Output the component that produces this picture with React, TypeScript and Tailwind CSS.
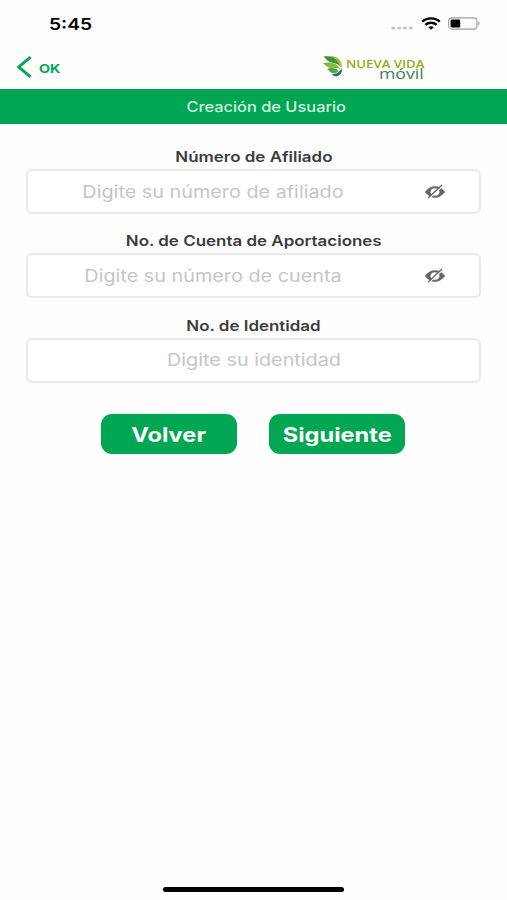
import type { ReactNode } from "react";

const fields = [
  {
    id: "afiliado",
    label: "Número de Afiliado",
    placeholder: "Digite su número de afiliado",
    hidden: true,
  },
  {
    id: "cuenta",
    label: "No. de Cuenta de Aportaciones",
    placeholder: "Digite su número de cuenta",
    hidden: true,
  },
  {
    id: "identidad",
    label: "No. de Identidad",
    placeholder: "Digite su identidad",
    hidden: false,
  },
] as const;

function StatusBar() {
  return (
    <div className="flex h-[47px] items-center justify-between pl-[49px] pr-[26px] text-black">
      <span className="inline-block origin-left scale-x-[1.2] text-[16px] font-semibold leading-none">5:45</span>
      <div className="flex items-center">
        <svg viewBox="0 0 24 6" aria-hidden="true" className="mt-[9px] h-[6px] w-[24px]" fill="#c4c4c4">
          <ellipse cx="3.4" cy="3" rx="2.1" ry="1.6" />
          <ellipse cx="9.2" cy="3" rx="2.1" ry="1.6" />
          <ellipse cx="15" cy="3" rx="2.1" ry="1.6" />
          <ellipse cx="20.8" cy="3" rx="2.1" ry="1.6" />
        </svg>
        <svg viewBox="0 0 20 13" aria-hidden="true" className="ml-[7px] h-[13px] w-[20px]">
          <g fill="none" stroke="#000" strokeWidth="2.4">
            <path d="M1.2 4.7C6 .2 14 .2 18.8 4.7" />
            <path d="M4.3 7.9c3.2-2.9 8.2-2.9 11.4 0" />
          </g>
          <path d="M7.2 10.2c1.6-1.3 4-1.3 5.6 0L10 12.7Z" fill="#000" />
        </svg>
        <svg viewBox="0 0 34 13" aria-hidden="true" className="ml-[6px] h-[13px] w-[34px]">
          <rect x="1.6" y=".9" width="28.4" height="11.2" rx="3.4" fill="none" stroke="#9b9b9b" strokeWidth="1.1" />
          <rect x="3.6" y="2.5" width="9.6" height="8" rx="1.2" fill="#000" />
          <path d="M31.4 4.7c1.4.5 1.4 3.1 0 3.6Z" fill="#777" />
        </svg>
      </div>
    </div>
  );
}

function Logo() {
  return (
    <div className="flex h-[30px] w-[104px] items-start">
      <svg viewBox="0 0 22 21" aria-hidden="true" className="mt-px h-[21px] w-[22px] shrink-0">
        <path d="M1.5.5C11-.8 18 1.5 19.5 11 15.5 7 9 7 6 5 4 3.8 3.5 2 1.5.5Z" fill="#3f9142" />
        <path d="M9 .2C15.5 0 20.3 4.5 20 11.5L17.5 9.5C16.5 5 13 2.5 9 .2Z" fill="#a3c42f" />
        <path d="M.8 7.2C6.5 5.8 15 6.2 18.3 13 14 11 10.5 13 6.5 11.4 4 10.4 3.3 8.4.8 7.2Z" fill="#86b93c" />
        <path d="M5 12.7C9.5 11.5 14.5 11.5 16.6 15.2 14.3 17 12 17.8 9.5 16.8 7.5 16 7 14 5 12.7Z" fill="#57a047" />
        <path d="M19.7 12.3C20.5 16 18.8 19.3 15 20.2 12.8 20.5 10.8 19.6 9.7 18.2 14 18.5 17.3 16.5 19.7 12.3Z" fill="#2c7150" />
      </svg>
      <div className="flex w-[80px] flex-col items-end font-['Open_Sans',sans-serif] leading-none">
        <span className="mt-[5px] origin-right scale-x-[1.2] whitespace-nowrap text-[11px] font-semibold leading-[8px] text-[#8fae1b]">
          NUEVA VIDA
        </span>
        <span className="origin-right scale-x-[1.22] text-[14.5px] leading-[11px] text-[#3e8356]">móvil</span>
      </div>
    </div>
  );
}

function NavBar() {
  return (
    <nav className="flex h-[42px] items-start justify-between pl-[16px] pr-[81px]">
      <button type="button" className="mt-[9px] flex items-center text-[#00a651]">
        <svg viewBox="0 0 16 22" aria-hidden="true" className="h-[22px] w-[16px]">
          <path d="M14.5 1.2 2.8 11l11.7 9.8" fill="none" stroke="currentColor" strokeWidth="2.9" />
        </svg>
        <span className="ml-[7px] mt-[3px] inline-block origin-left scale-x-[1.2] text-[12px] font-bold leading-none">OK</span>
      </button>
      <div className="mt-[8px]">
        <Logo />
      </div>
    </nav>
  );
}

function EyeOff() {
  return (
    <svg viewBox="0 0 22 16" aria-hidden="true" className="h-[16px] w-[22px]">
      <path
        fillRule="evenodd"
        d="M.8 8C4.3 3.9 7.5 2.3 11 2.3S17.7 3.9 21.2 8C17.7 12.1 14.5 13.7 11 13.7S4.3 12.1.8 8ZM11 11.8c2.7 0 4.5-1.6 4.5-3.8S13.7 4.2 11 4.2 6.5 5.8 6.5 8s1.8 3.800 4.500 3.800Z"
        fill="#666"
      />
      <path d="M4.9 14.8 18.8 1.8" stroke="#fff" strokeWidth="1.2" />
      <path d="M4.1 14 18 1" stroke="#666" strokeWidth="1.3" />
    </svg>
  );
}

function ActionButton({ children }: { children: ReactNode }) {
  return (
    <button type="button" className="h-[40px] w-[136px] rounded-[11px] bg-[#00a651] pt-[4px] text-white">
      <span className="inline-block scale-x-[1.18] text-[20px] font-bold leading-none">{children}</span>
    </button>
  );
}

export default function App() {
  return (
    <div className="flex h-[900px] w-[507px] flex-col overflow-hidden bg-[#fefefe] font-[Inter,'Liberation_Sans',sans-serif]">
      <StatusBar />
      <NavBar />
      <h1 className="flex h-[35px] items-center justify-center bg-[#00a651] pl-[25px] text-[14px] font-medium text-[#d4f3df]">
        <span className="inline-block scale-x-[1.17] leading-none">Creación de Usuario</span>
      </h1>

      <form className="flex flex-col px-[26px] pt-[21px]">
        {fields.map((field) => (
          <div key={field.id} className="h-[84.3px]">
            <label htmlFor={field.id} className="flex h-[24px] items-center justify-center text-[14px] font-semibold text-[#3c3c3c]">
              <span className="inline-block scale-x-[1.21] leading-none">{field.label}</span>
            </label>
            <div className="flex h-[45px] items-center rounded-[6px] border-2 border-[#e9e9e9] bg-white">
              <div className="flex min-w-0 flex-1 justify-center">
                <input
                  id={field.id}
                  placeholder={field.placeholder}
                  className="h-[38px] w-[300px] scale-x-[1.165] bg-transparent text-center text-[17px] outline-none placeholder:text-[#c6c6c6]"
                />
              </div>
              {field.hidden && (
                <button type="button" aria-label="Mostrar" className="mr-[33px] flex w-[48px] justify-end">
                  <EyeOff />
                </button>
              )}
            </div>
          </div>
        ))}
        <div className="mt-[16px] flex justify-center gap-[32px] pr-px">
          <ActionButton>Volver</ActionButton>
          <ActionButton>Siguiente</ActionButton>
        </div>
      </form>

      <div className="mx-auto mb-[8px] mt-auto h-[5px] w-[181px] rounded-full bg-black" />
    </div>
  );
}
